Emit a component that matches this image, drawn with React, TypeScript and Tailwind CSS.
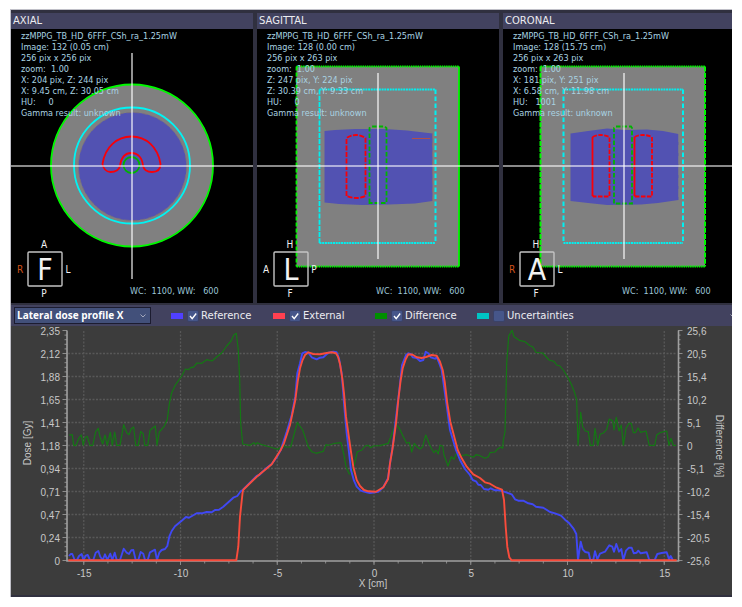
import type { ReactNode } from "react";

const SANS = "font-['DejaVu_Sans_Condensed','DejaVu_Sans',sans-serif]";

type Side = { top: string; right: string; bottom: string; left: string; face: string };

function OrientationCube({ side }: { side: Side }) {
  return (
    <g fill="#f2f2f2" fontSize="10" textAnchor="middle">
      <rect x="17" y="223" width="34" height="34" rx="1" fill="none" stroke="#c4c4c4" strokeWidth="1.4" />
      <text x="34" y="251" fontSize="30">{side.face}</text>
      <text x="33" y="219">{side.top}</text>
      <text x="33" y="268">{side.bottom}</text>
      <text x="9" y="244" fill={side.left === "R" ? "#d2521a" : "#f2f2f2"}>{side.left}</text>
      <text x="57" y="244">{side.right}</text>
    </g>
  );
}

type ViewProps = {
  title: string;
  viewBox: string;
  info: string[];
  side: Side;
  top: number;
  bottom: number;
  children: ReactNode;
};

function SliceView({ title, viewBox, info, side, top, bottom, children }: ViewProps) {
  return (
    <section className="flex min-w-0 flex-col bg-black">
      <h2 className="h-4 bg-[#42425f] pl-0.5 text-[10px] leading-4 text-[#ececf0] font-['DejaVu_Sans',sans-serif]">{title}</h2>
      <div className="relative overflow-hidden">
        <svg viewBox={viewBox} className="block h-auto w-full">
          {children}
          <g stroke="#ffffff" strokeOpacity="0.72" strokeWidth="1.6">
            <line x1="0" x2="260" y1="137" y2="137" />
            <line x1="121" x2="121" y1={top} y2={bottom} />
          </g>
          <OrientationCube side={side} />
        </svg>
        <div className="absolute top-0.5 left-2.5 text-[9px] leading-[11px] whitespace-pre text-[#a9d3e2]">
          {info.map((line) => (
            <p key={line}>{line}</p>
          ))}
        </div>
        <p className="absolute bottom-1.5 left-[119px] text-[9px] leading-[11px] whitespace-pre text-[#9cc6d8]">
          {"WC:  1100, WW:   600"}
        </p>
      </div>
    </section>
  );
}

function AxialView() {
  return (
    <SliceView
      title="AXIAL"
      viewBox="0 0 242 274"
      top={24}
      bottom={250}
      side={{ top: "A", right: "L", bottom: "P", left: "R", face: "F" }}
      info={[
        "zzMPPG_TB_HD_6FFF_CSh_ra_1.25mW",
        "Image: 132 (0.05 cm)",
        "256 pix x 256 pix",
        "zoom:  1.00",
        "X: 204 pix, Z: 244 pix",
        "X: 9.45 cm, Z: 30.05 cm",
        "HU:     0",
        "Gamma result: unknown",
      ]}
    >
      <g fill="none" strokeWidth="1.8">
        <circle cx="121" cy="136.5" r="81" fill="#808080" stroke="#00f800" />
        <circle cx="121.5" cy="137.5" r="54" fill="#5252b2" stroke="#7c7078" strokeWidth="0.8" strokeDasharray="5 3" />
        <circle cx="121" cy="136.5" r="58" stroke="#00f4f4" />
        <path
          stroke="#f80008"
          d="M91.500 135C94 118 106 107.500 120.500 107.500S147 118 149.500 135C149.500 141 146 143 141 143C135.500 143 133 141 132 137C131.500 129 127 124 120.500 124S110 129 109 137C108 141 104.500 143 99.500 143C95 143 92 139 91.500 135Z"
        />
        <circle cx="120.500" cy="136" r="8" stroke="#00b400" />
      </g>
    </SliceView>
  );
}

function SagittalView() {
  return (
    <SliceView
      title="SAGITTAL"
      viewBox="0 0 242 274"
      top={44}
      bottom={230}
      side={{ top: "H", right: "P", bottom: "F", left: "A", face: "L" }}
      info={[
        "zzMPPG_TB_HD_6FFF_CSh_ra_1.25mW",
        "Image: 128 (0.00 cm)",
        "256 pix x 263 pix",
        "zoom:  1.00",
        "Z: 247 pix, Y: 224 pix",
        "Z: 30.39 cm, Y: 9.33 cm",
        "HU:     0",
        "Gamma result: unknown",
      ]}
    >
      <rect x="39.5" y="37.5" width="162.5" height="200" fill="#808080" />
      <g fill="none" strokeWidth="1.8">
        <path stroke="#00f800" strokeDasharray="1.5 0.7" d="M39.500 37.500H202M39.500 237.500H202" />
        <path stroke="#00f800" strokeDasharray="4 2" d="M39.500 37.500V237.500" />
        <path stroke="#00f800" d="M202 37.500V237.500" />
        <path d="M67.500 102L78 101L98 100L128 100L150 101.500L175.500 104.500V172L158 174.500L132 175.500L105 176L82 175L67.500 173.500Z" fill="#5252b2" />
        <path d="M175.500 104.500V172" stroke="#8a6a70" strokeWidth="0.8" strokeDasharray="5 4" />
        <path stroke="#00f0f0" strokeDasharray="2 0.7" d="M62.500 60.500H178.500M62.500 214H178.500" />
        <path stroke="#00f0f0" strokeDasharray="5 1.2" d="M62.500 60.500V214" />
        <path stroke="#00f0f0" strokeDasharray="4.500 2.500" d="M178.500 60.500V214" strokeWidth="2" />
        <path stroke="#f80008" strokeDasharray="5 1.500" d="M89.500 167V109Q99 103 108.500 109V167Q99 171 89.500 167" />
        <path stroke="#00b400" strokeDasharray="4.500 2" d="M112.500 174V99L115 97.500H128L129.500 99V174Z" />
        <path stroke="#b05048" strokeWidth="1" d="M155 109.500H173" />
      </g>
    </SliceView>
  );
}

function CoronalView() {
  return (
    <SliceView
      title="CORONAL"
      viewBox="0 0 229 274"
      top={44}
      bottom={230}
      side={{ top: "H", right: "L", bottom: "F", left: "R", face: "A" }}
      info={[
        "zzMPPG_TB_HD_6FFF_CSh_ra_1.25mW",
        "Image: 128 (15.75 cm)",
        "256 pix x 263 pix",
        "zoom:  1.00",
        "X: 181 pix, Y: 251 pix",
        "X: 6.58 cm, Y: 11.98 cm",
        "HU:   1001",
        "Gamma result: unknown",
      ]}
    >
      <rect x="37.5" y="37.5" width="164.5" height="200" fill="#808080" />
      <g fill="none" strokeWidth="1.8">
        <path stroke="#00f800" strokeDasharray="1.5 0.7" d="M37.500 37.500H202M37.500 237.500H202" />
        <path stroke="#00f800" strokeDasharray="5 1.2" d="M37.500 37.500V237.500M202 37.500V237.500" strokeWidth="2" />
        <path d="M67.500 104.500L85 102L104 99.500L122 101L144 100.500L160 102L175.500 105V171L155 174L138 175.500L104 176L85 174L67.500 172Z" fill="#5252b2" />
        <path d="M175.500 105V171" stroke="#77778c" strokeWidth="0.8" strokeDasharray="8 3" />
        <path stroke="#00f0f0" strokeDasharray="2 0.7" d="M60.500 60.500H180M60.500 214H180" />
        <path stroke="#00f0f0" strokeDasharray="4.500 2.500" d="M60.500 60.500V214M180 60.500V214" strokeWidth="2" />
        <g stroke="#f80008">
          <path d="M89.500 108V166.500L91 167.500M131.500 108V166.500L133 167.500" />
          <path strokeDasharray="4.500 1.500" d="M89.500 108Q98 104 106.500 108V167.500H90M131.500 108Q140 104 149 108V167.500H132" />
        </g>
        <path stroke="#00b400" strokeDasharray="4.500 2" d="M111 174.500V99L113 97.500H128L129 99V174.500Z" />
      </g>
    </SliceView>
  );
}

/* Samples are stored three to a chart unit, in strips that carry their own origin. */
function strip(originX: number, originY: number, samples: string) {
  return samples
    .split(" ")
    .map((pair) => {
      const [x, y] = pair.split(",").map(Number);
      return `${(originX + x / 3).toFixed(1)},${(originY + y / 3).toFixed(1)}`;
    })
    .join(" ");
}

const difference = [
  strip(0, 300, "207,405 217,404 221,436 228,436 238,412 244,405 250,436 255,413 262,409 270,436 278,436 287,395 295,385 300,410 308,432 315,405 322,436 331,397 337,436 344,396 350,436 360,436 371,374 380,398 387,404 394,386 401,381 407,436 415,436 422,394 430,402 434,436 443,436 450,391 466,378 471,436 478,396 492,380 502,358 508,312 515,278 525,257 545,228 556,207 565,209 574,202 580,202 591,189 605,190 620,179 636,183 650,171 665,159 680,138 693,123 702,104 709,100 715,150 719,240 722,370"),
  strip(240, 300, "8,432 30,436 42,428 47,434 52,428 62,433 80,438 100,444 115,448 128,436 138,441 152,441 172,367 188,390 205,440 215,455 228,460 250,454 258,434 265,436 285,430 303,428 312,465 318,500 328,522 335,520 345,485 352,455 366,450 375,438 385,436 392,443 400,438 420,437 445,430 460,390 468,372 478,385 490,410 500,430 508,427 515,456 523,430 532,441 540,447 548,440 557,405 567,430 574,445 582,458 588,450 595,462 600,436 608,438 612,465 624,498 634,470 642,478 648,462 660,468 680,464 700,472 708,464"),
  strip(480, 300, "0,467 15,475 25,470 30,458 45,456 52,448 62,441 68,445 70,420 75,395 78,280 80,190 86,108 96,91 102,110 118,121 135,125 150,137 158,140 168,157 188,159 207,180 222,184 230,195 240,198 252,213 265,235 275,255 283,275 290,300 294,436 302,337 308,380 316,393 325,395 331,436 340,436 345,385 353,436 360,403 370,399 380,388 388,357 398,362 402,390 409,352 417,393 424,375 430,436 438,385 447,370 454,370 460,398 466,398 474,384 482,397 498,393 508,436 524,436 530,405 540,398 560,393 567,436 573,415 580,436 588,436"),
].join(" ");

const reference = [
  strip(0, 450, "207,318 212,312 217,312 224,330 231,330 237,318 245,312 250,330 257,317 263,315 270,330 280,330 287,308 295,303 301,320 308,330 315,313 322,330 331,311 337,330 344,308 350,330 360,330 371,296 380,308 387,312 394,301 400,300 407,330 415,330 422,306 430,311 435,330 443,330 450,307 465,299 471,330 478,308 485,300 495,297 502,288 508,260 515,243 525,229 545,212 558,201 567,203 590,190 605,190 620,186 635,187 645,180 657,179 670,170 690,152 700,143 712,138 722,124"),
  strip(240, 450, "8,120 50,78 58,75 75,58 95,42 110,22 122,0 140,-55 155,-105 166,-160 172,-230 180,-260 187,-290 195,-294 205,-292 215,-278 230,-272 240,-277 250,-278 265,-292 280,-295 290,-293 297,-275 305,-230 312,-140 320,-50 326,0 333,60 342,92 350,110 362,122 380,127 390,129 415,125 430,112 444,85 452,25 458,-10 465,-70 472,-130 478,-180 486,-255 498,-285 505,-290 512,-288 518,-278 530,-276 540,-267 550,-270 557,-295 565,-290 572,-278 585,-274 590,-278 597,-262 605,-240 612,-190 622,-120 630,-60 648,0 660,30 675,57 690,75 698,90 708,94 715,104"),
  strip(480, 450, "2,105 12,117 25,119 32,115 45,121 60,121 72,125 95,133 105,148 115,152 130,152 145,160 158,163 168,170 190,173 210,186 225,190 243,197 255,209 268,220 280,235 289,252 294,330 302,275 308,298 316,306 326,308 331,330 340,330 345,304 352,328 360,311 375,305 388,286 397,290 402,305 409,282 417,305 424,297 430,330 438,302 447,293 455,293 461,310 470,308 475,302 482,310 500,307 508,330 524,330 532,312 545,309 560,307 567,328 572,318 578,330"),
].join(" ");

const external = [
  strip(0, 450, "205,331 709,331 715,290 720,200 728,125"),
  strip(240, 450, "10,119 50,80 95,43 122,0 132,-20 150,-75 166,-150 173,-205 180,-245 187,-268 195,-285 205,-293 220,-288 240,-287 260,-291 275,-293 288,-290 294,-280 300,-258 307,-215 312,-170 318,-100 332,0 340,50 350,90 360,108 372,120 385,124 408,125 430,112 444,88 450,40 457,0 468,-80 475,-150 482,-210 488,-245 497,-272 505,-287 518,-286 530,-278 545,-276 558,-279 575,-285 590,-283 600,-265 608,-240 614,-205 622,-140 631,-85 653,0 665,25 680,50 700,73"),
  strip(480, 450, "-20,73 0,84 15,97 30,101 50,113 66,119 72,150 77,230 82,290 88,322 95,331 590,331"),
].join(" ");

const doseTicks = ["2,35", "2,12", "1,88", "1,65", "1,41", "1,18", "0,94", "0,71", "0,47", "0,24", "0"];
const differenceTicks = ["25,6", "20,5", "15,4", "10,2", "5,1", "0", "-5,1", "-10,2", "-15,4", "-20,5", "-25,6"];
const positionTicks = [-15, -10, -5, 0, 5, 10, 15];

const tickX = (cm: number) => 374 + cm * 19.35;
const tickY = (index: number) => 330.5 + index * 23;

function ProfileChart() {
  const minorX = Array.from({ length: 25 }, (_, i) => tickX((i - 12) * 1.25));
  const minorY = Array.from({ length: 51 }, (_, i) => 330.5 + i * 4.6);
  return (
    <svg
      viewBox="11 326 721 269"
      className="block h-auto w-full bg-[#3c3c3c] font-['Liberation_Sans',Arial,sans-serif]"
      role="img"
      aria-label="Lateral dose profile X"
    >
      <g stroke="#585858" strokeWidth="1.300" strokeDasharray="2 1.500">
        {doseTicks.slice(1, -1).map((tick, i) => (
          <line key={tick} x1="68" x2="677" y1={tickY(i + 1)} y2={tickY(i + 1)} />
        ))}
        {positionTicks.map((cm) => (
          <line key={cm} x1={tickX(cm)} x2={tickX(cm)} y1="331" y2="560" />
        ))}
      </g>
      <g stroke="#8c8c8c" strokeWidth="1">
        {minorX.map((x) => (
          <line key={x} x1={x} x2={x} y1="561" y2="563.5" />
        ))}
        {minorY.map((y) => (
          <g key={y}>
            <line x1="64.5" x2="67" y1={y} y2={y} />
            <line x1="678" x2="680.5" y1={y} y2={y} />
          </g>
        ))}
        {positionTicks.map((cm) => (
          <line key={cm} x1={tickX(cm)} x2={tickX(cm)} y1="561" y2="565" />
        ))}
        {doseTicks.map((tick, i) => (
          <g key={tick}>
            <line x1="62.500" x2="67" y1={tickY(i)} y2={tickY(i)} />
            <line x1="678" x2="682.500" y1={tickY(i)} y2={tickY(i)} />
          </g>
        ))}
        <path d="M67 330.500V561H678.500V330.500" fill="none" strokeWidth="1.600" stroke="#a0a0a0" />
      </g>
      <g fill="none" strokeLinejoin="round">
        <polyline points={difference} stroke="#147814" strokeWidth="1.200" />
        <polyline points={reference} stroke="#4048f4" strokeWidth="1.900" />
        <polyline points={external} stroke="#fa4c3c" strokeWidth="1.900" />
      </g>
      <g fill="#c8c8c8" fontSize="10">
        {doseTicks.map((tick, i) => (
          <text key={tick} x="60" y={tickY(i) + 4} textAnchor="end">{tick}</text>
        ))}
        {differenceTicks.map((tick, i) => (
          <text key={tick} x="687" y={tickY(i) + 4}>{tick}</text>
        ))}
        {positionTicks.map((cm) => (
          <text key={cm} x={tickX(cm) + 0.5} y="577" textAnchor="middle">{cm}</text>
        ))}
        <text x="373" y="587" textAnchor="middle">X [cm]</text>
        <text transform="translate(31 443) rotate(-90)" textAnchor="middle">Dose [Gy]</text>
        <text transform="translate(716 446) rotate(90)" textAnchor="middle">Difference [%]</text>
      </g>
    </svg>
  );
}

const series = [
  { name: "Reference", swatch: "bg-[#5040ff]", shown: true },
  { name: "External", swatch: "bg-[#ff4050]", shown: true },
  { name: "Difference", swatch: "bg-[#009000]", shown: true },
  { name: "Uncertainties", swatch: "bg-[#00c4c4]", shown: false },
];

function ProfileToolbar() {
  return (
    <div className="flex h-[21px] items-center overflow-hidden bg-[#42425f] pl-[3px]">
      <div className="relative mr-5 w-[137px] shrink-0">
        <select
          aria-label="Profile"
          className="block h-[17px] w-full appearance-none border border-[#1c1c30] bg-[#42507a] pl-0.5 text-[10px] leading-[15px] font-bold text-white font-['Open_Sans',sans-serif]"
        >
          <option>Lateral dose profile X</option>
        </select>
        <svg viewBox="0 0 6 4" className="pointer-events-none absolute top-[7px] right-[5px] h-1 w-1.5">
          <path d="M0.500 0.500L3 3L5.500 0.500" fill="none" stroke="#a4a8bc" />
        </svg>
      </div>
      <div className="flex shrink-0">
        {series.map((item) => (
          <label key={item.name} className="flex w-[102px] items-center text-[10px] leading-4 whitespace-nowrap text-[#ececf0] font-['DejaVu_Sans',sans-serif]">
            <span className={`mr-1 h-1.5 w-3 shrink-0 ${item.swatch}`} />
            <span className="mr-0.5 grid shrink-0">
              <input
                type="checkbox"
                defaultChecked={item.shown}
                className="peer col-start-1 row-start-1 size-3 appearance-none rounded-xs border border-[#3a4268] bg-[#46568a]"
              />
              <svg viewBox="0 0 12 12" className="pointer-events-none invisible col-start-1 row-start-1 size-3 peer-checked:visible">
                <path d="M3 6L5.200 8.600L9.200 3.500" fill="none" stroke="#ffffff" strokeWidth="1.400" />
              </svg>
            </span>
            {item.name}
          </label>
        ))}
      </div>
      <svg viewBox="0 0 6 4" className="-mr-1 ml-auto h-1 w-1.5 shrink-0">
        <path d="M0.500 0.500L3 3L5.500 0.500" fill="none" stroke="#a4a8bc" />
      </svg>
    </div>
  );
}

export default function App() {
  return (
    <main className="min-h-screen bg-white px-2.5 pt-[9px] pb-2.5">
      <div className={`border-t border-l border-[#c0c0c8] bg-[#30303f] ${SANS}`}>
        <div className="grid grid-cols-[242fr_242fr_229fr] gap-1 pt-[3px]">
          <AxialView />
          <SagittalView />
          <CoronalView />
        </div>
        <div className="pt-0.5 pb-0.5">
          <ProfileToolbar />
          <ProfileChart />
        </div>
      </div>
    </main>
  );
}
